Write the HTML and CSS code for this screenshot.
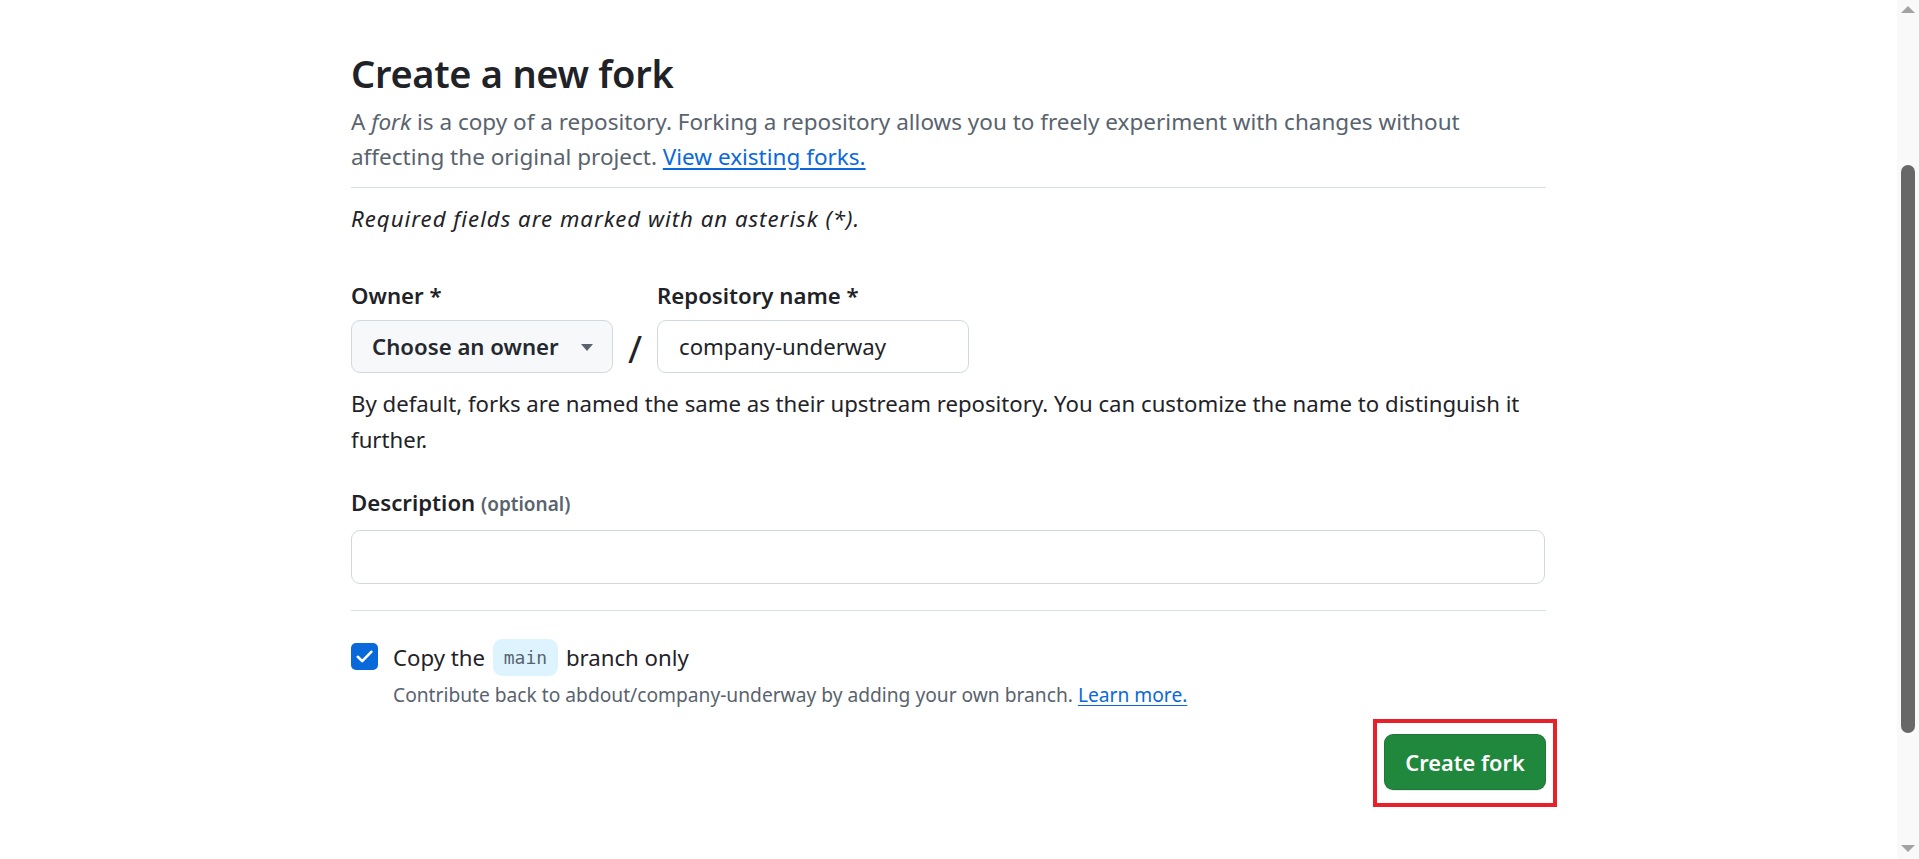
FILE: index.html
```html
<!DOCTYPE html>
<html lang="en">
<head>
<meta charset="utf-8">
<title>Create a new fork</title>
<link rel="stylesheet" href="styles.css">
</head>
<body>
<div class="page">
  <main class="main">
    <div class="container">
      <header class="head">
        <h1 class="title">Create a new fork</h1>
        <p class="lead">A <em>fork</em> is a copy of a repository. Forking a repository allows you to freely experiment with changes without affecting the original project. <a href="#" class="link">View existing forks.</a></p>
      </header>
      <hr class="rule rule-top">
      <p class="required">Required fields are marked with an asterisk (*).</p>

      <div class="name-row">
        <div class="field">
          <label class="label">Owner *</label>
          <button class="owner-btn" type="button">
            <span>Choose an owner</span>
            <svg class="caret" width="12" height="7" viewBox="0 0 12 7"><path d="M0 0h12L6 7z" fill="#59636e"/></svg>
          </button>
        </div>
        <div class="slash">/</div>
        <div class="field">
          <label class="label">Repository name *</label>
          <div class="text-input repo-input">company-underway</div>
        </div>
      </div>
      <p class="note">By default, forks are named the same as their upstream repository. You can customize the name to distinguish it further.</p>

      <label class="label desc-label">Description <span class="optional">(optional)</span></label>
      <div class="text-input desc-input"></div>

      <hr class="rule rule-bottom">

      <div class="check-row">
        <span class="checkbox">
          <svg width="17" height="13" viewBox="0 0 17 13"><path d="M1.8 6.8l4.4 4.3L15.3 1.8" fill="none" stroke="#fff" stroke-width="2.6" stroke-linecap="round" stroke-linejoin="round"/></svg>
        </span>
        <div class="check-text">
          <div class="check-label">Copy the <code class="pill">main</code> branch only</div>
          <div class="check-note">Contribute back to abdout/company-underway by adding your own branch. <a href="#" class="link">Learn more.</a></div>
        </div>
      </div>

      <div class="actions">
        <span class="highlight">
          <button class="create-btn" type="button">Create fork</button>
        </span>
      </div>
    </div>
  </main>
  <aside class="scrollbar">
    <span class="arrow arrow-up"></span>
    <span class="track"><span class="thumb"></span></span>
    <span class="arrow arrow-down"></span>
  </aside>
</div>
</body>
</html>
```

FILE: styles.css
```css
* { box-sizing: border-box; }
html, body { margin: 0; padding: 0; height: 100%; overflow: hidden; background: #fff; }
body {
  font-family: "Noto Sans", "Open Sans", sans-serif;
  color: #1f2328;
  font-size: 22.2px;
}
.page { display: flex; height: 859px; }
.main { flex: 1; min-width: 0; }
.container { width: 1195px; margin-left: 351px; }

.head { padding-top: 51px; }
.title {
  margin: 0;
  font-size: 38px;
  line-height: 44px;
  font-weight: 600;
  letter-spacing: -0.3px;
  color: #1f2328;
}
.lead {
  margin: 9px 0 0;
  font-size: 22.5px;
  line-height: 35px;
  color: #59636e;
}
.link { color: #0969da; text-decoration: underline; text-underline-offset: 3px; }

.rule { border: 0; height: 1px; background: #d8dee4; margin: 0; }
.rule-top { margin-top: 13px; }
.required {
  margin: 15px 0 0;
  font-style: italic;
  line-height: 31.5px;
  letter-spacing: 1px;
}

.name-row { display: flex; align-items: flex-end; margin-top: 45px; }
.field { display: flex; flex-direction: column; }
.label { display: block; font-weight: 600; line-height: 31.5px; margin-bottom: 9px; }
.owner-btn {
  display: flex; align-items: center; justify-content: space-between;
  width: 262px; height: 53px;
  padding: 0 19px 0 20px;
  background: #f6f8fa;
  border: 1px solid #d1d9e0;
  border-radius: 9px;
  font: inherit; font-weight: 600; color: #25292e;
}
.caret { margin-top: 2px; }
.slash {
  width: 44px; height: 53px;
  display: flex; align-items: center; justify-content: center;
  font-size: 38px; color: #1f2328; padding-top: 2px;
}
.text-input {
  height: 53px;
  border: 1px solid #d1d9e0;
  border-radius: 9px;
  background: #fff;
  display: flex; align-items: center;
}
.repo-input { width: 312px; padding-left: 21px; }
.note { margin: 13px 0 0; line-height: 35.5px; }

.desc-label { margin-top: 30px; }
.optional { font-size: 19px; color: #59636e; }
.desc-input { width: 1194px; height: 54px; }

.rule-bottom { margin-top: 26px; }

.check-row { display: flex; gap: 15px; margin-top: 31px; }
.checkbox {
  flex: none;
  width: 27px; height: 27px;
  margin-top: 1px;
  border-radius: 5px;
  background: #0969da;
  display: flex; align-items: center; justify-content: center;
}
.check-text { display: flex; flex-direction: column; }
.check-label { line-height: 31px; margin-top: 0; }
.pill {
  display: inline-block;
  font-family: "DejaVu Sans Mono", "Liberation Mono", monospace;
  font-size: 18px;
  line-height: 37px;
  padding: 0 11px;
  border-radius: 9px;
  background: #ddf4ff;
  color: #59636e;
  vertical-align: middle;
  margin: -4px 2px 0;
}
.check-note { font-size: 19.2px; color: #59636e; line-height: 27px; margin-top: 5px; }

.actions { display: flex; justify-content: flex-end; margin-top: 26px; }
.highlight { position: relative; display: inline-flex; }
.highlight::after {
  content: "";
  position: absolute;
  left: -11px; right: -11px; top: -15px; bottom: -17px;
  border: 4px solid #e8202a;
  pointer-events: none;
}
.create-btn {
  width: 162px; height: 56px;
  border: 1px solid rgba(31, 35, 40, 0.15);
  border-radius: 9px;
  background: #1f883d;
  color: #fff;
  font: inherit; font-size: 21.8px; font-weight: 600;
  box-shadow: 0 1px 0 rgba(31,35,40,0.1);
}

.scrollbar {
  flex: none;
  width: 22px;
  background: #f9f9f9;
  display: flex; flex-direction: column; align-items: center;
}
.arrow { width: 0; height: 0; border-left: 7px solid transparent; border-right: 7px solid transparent; }
.arrow-up { border-bottom: 7px solid #a3a3a3; margin-top: 6px; }
.arrow-down { border-top: 7px solid #a3a3a3; margin-bottom: 7px; }
.track { flex: 1; width: 100%; display: flex; justify-content: center; padding-top: 152px; padding-bottom: 112px; }
.thumb { width: 14px; height: 100%; background: #686868; border-radius: 7px; }
```
